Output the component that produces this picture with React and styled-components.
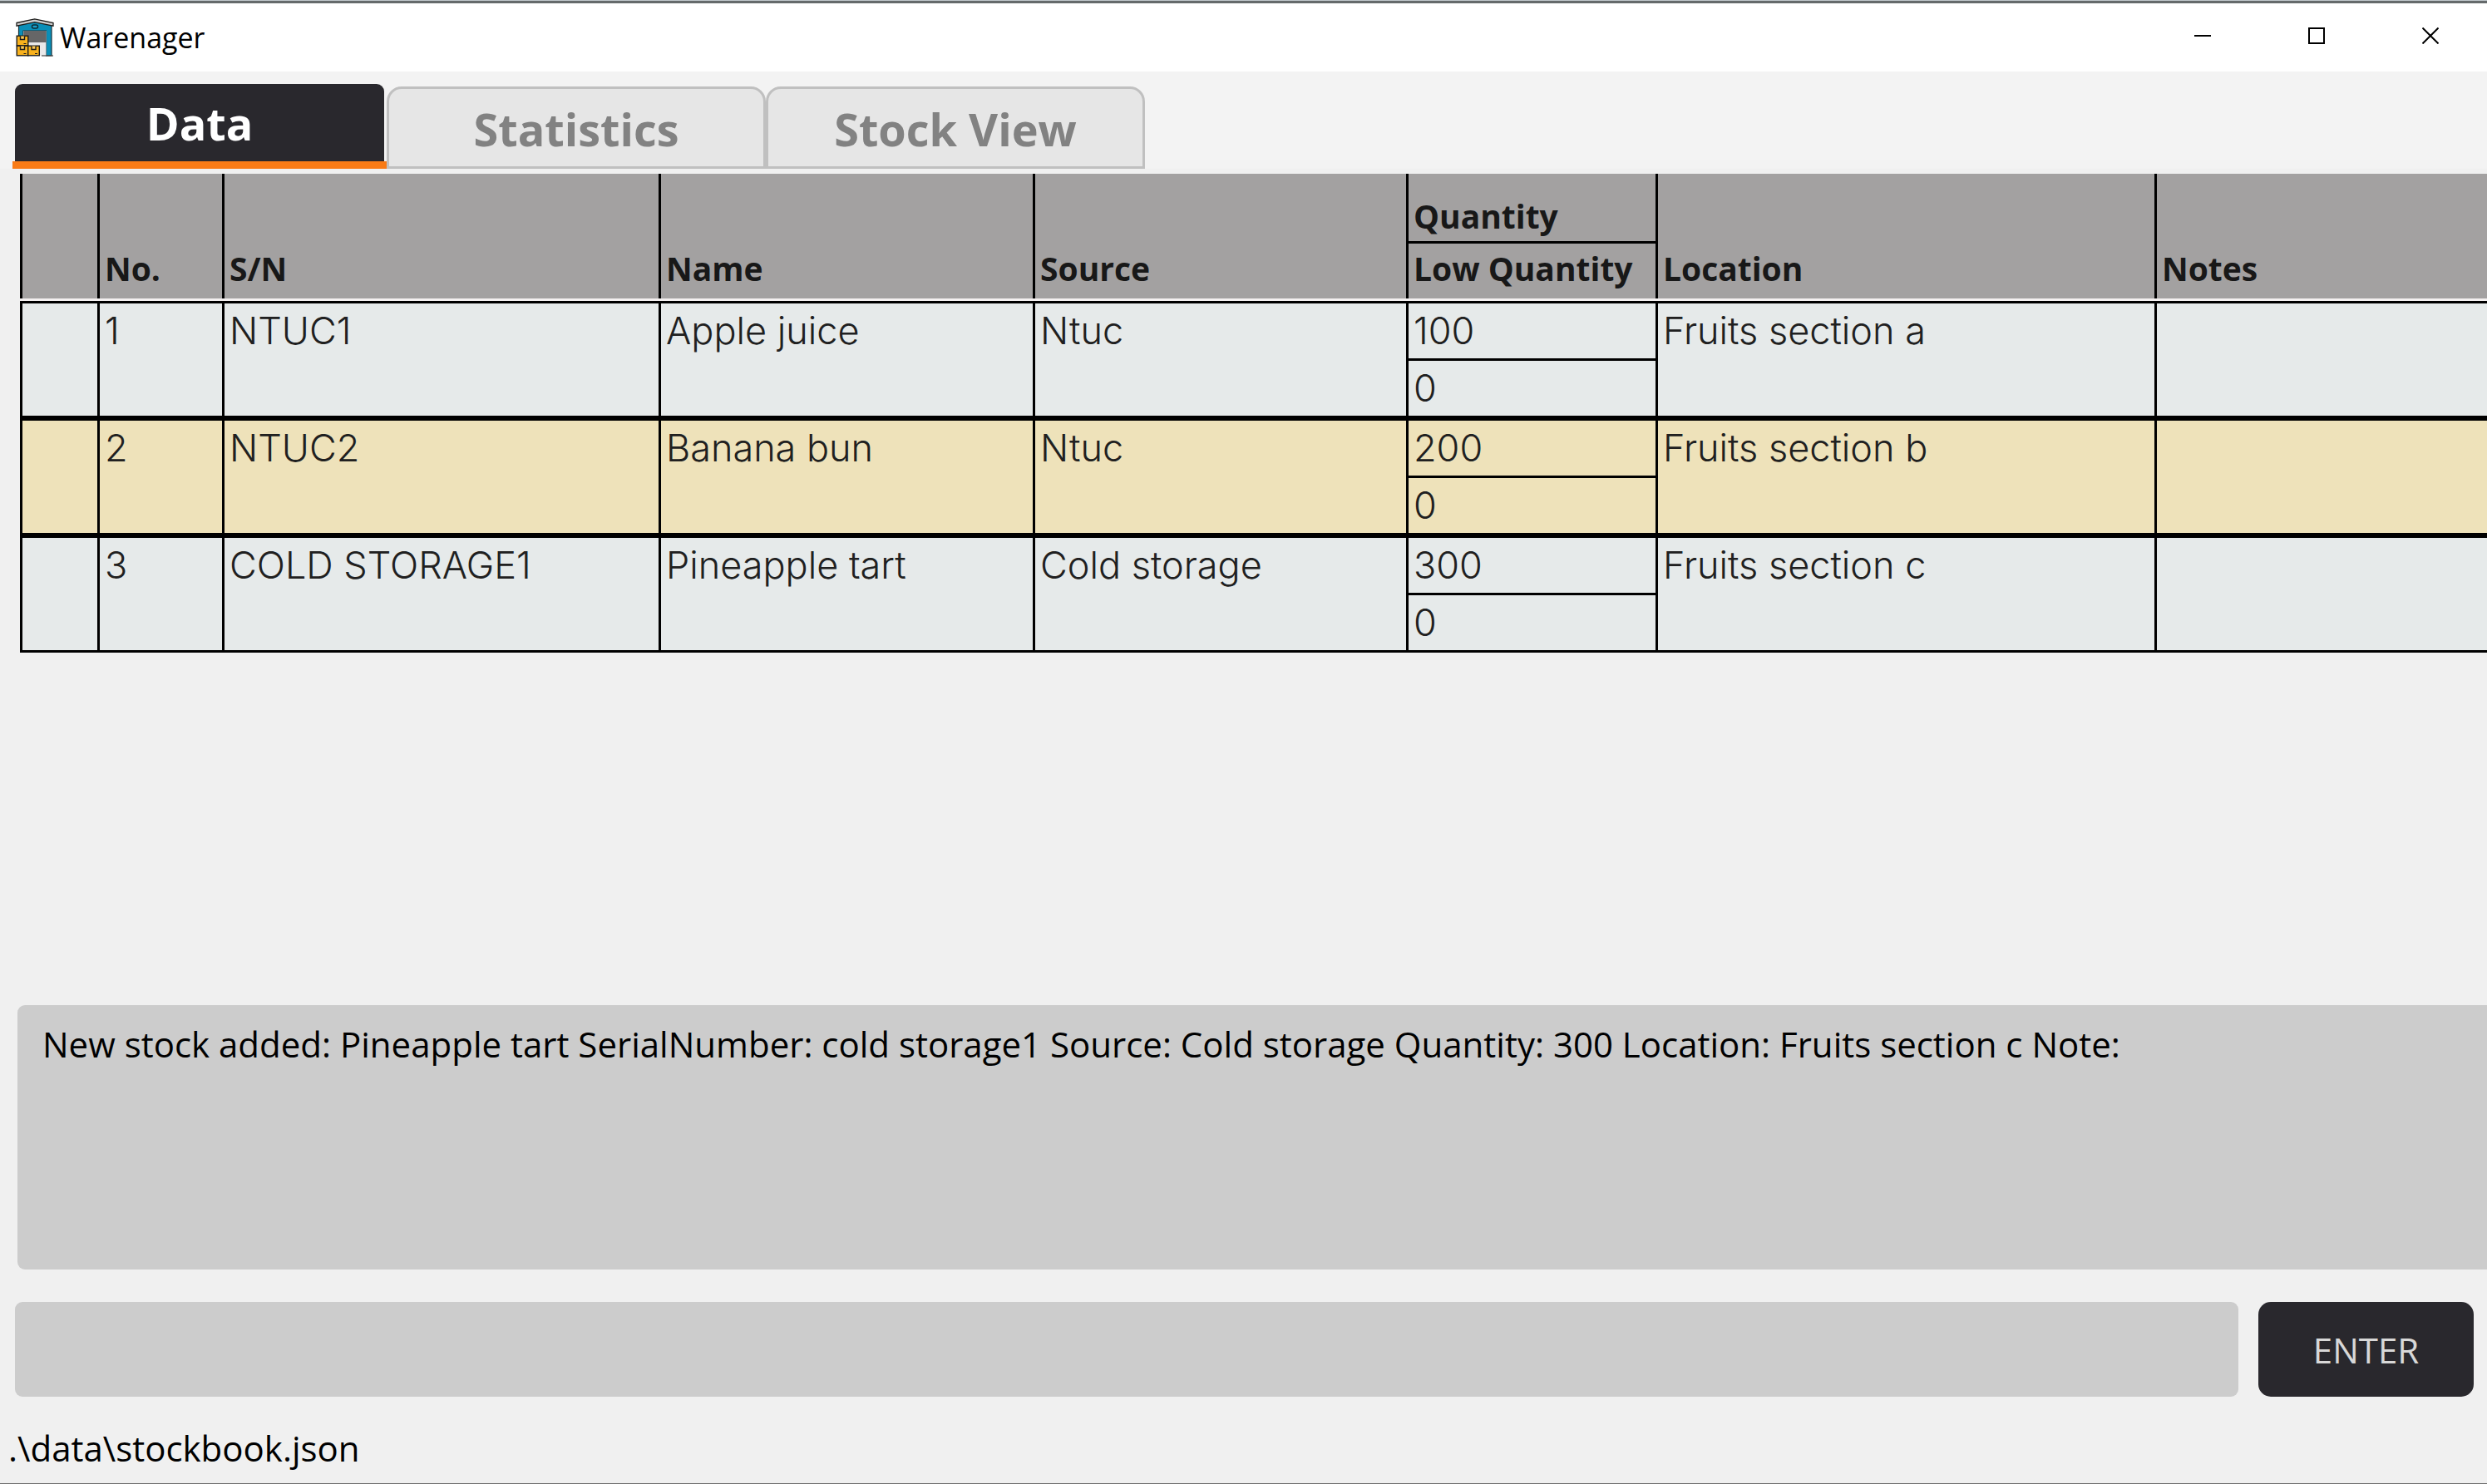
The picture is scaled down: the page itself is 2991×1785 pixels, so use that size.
import React, { useState } from "react";
import styled, { createGlobalStyle } from "styled-components";

const GlobalStyle = createGlobalStyle`
  *, *::before, *::after { box-sizing: border-box; }
  body { margin: 0; background: #f0f0f0; }
  button, input { font: inherit; margin: 0; border: 0; padding: 0; }
`;

const uiFont = `"Open Sans", "Noto Sans", sans-serif`;
const bodyFont = `"Inter", "Open Sans", sans-serif`;

const Window = styled.div`
  display: flex;
  flex-direction: column;
  min-height: 100vh;
  overflow: hidden;
  background: #f0f0f0;
  border-top: 1px solid #c0c8cc;
  border-bottom: 1px solid #6e6e6e;
  font-family: ${uiFont};
  color: #000;
`;

const TitleBar = styled.header`
  display: flex;
  align-items: center;
  gap: 7px;
  height: 85px;
  padding-left: 19px;
  background: #fff;
  border-top: 3px solid #656a6b;
`;

const Title = styled.h1`
  flex: 1;
  margin: 0;
  font-size: 34px;
  line-height: 48px;
  font-weight: 400;
`;

const Controls = styled.div`
  display: flex;
  align-self: flex-start;
`;

const ControlButton = styled.button`
  display: flex;
  align-items: center;
  justify-content: center;
  width: 137px;
  height: 78px;
  background: none;
`;

const TabStrip = styled.nav`
  display: flex;
  align-items: flex-end;
  height: 117px;
  padding-left: 15px;
  margin-bottom: 6px;
  background: #f3f3f3;
`;

const ActiveTab = styled.button`
  width: 450px;
  padding: 0 3px;
  background: none;
  border-bottom: 9px solid #f97b16;
`;

const ActiveLabel = styled.span`
  display: block;
  padding-top: 2px;
  border-radius: 9px 9px 0 0;
  background: #29282d;
  color: #fff;
  font-size: 54px;
  line-height: 91px;
  font-weight: 700;
`;

const Tab = styled.button`
  width: 456px;
  height: 99px;
  padding-top: 3px;
  border: 3px solid #c0c0c0;
  border-radius: 18px 18px 0 0;
  background: #e6e6e6;
  color: #828282;
  font-size: 54px;
  line-height: 84px;
  font-weight: 700;
`;

const TableArea = styled.main`
  flex: 1;
  padding-left: 24px;
`;

const StockTable = styled.table`
  width: 100%;
  table-layout: fixed;
  border-collapse: separate;
  border-spacing: 0;
`;

const Col = styled.col`
  width: ${(p) => (p.$width ? `${p.$width}px` : "auto")};
`;

const HeadCell = styled.th`
  height: 150px;
  padding: ${(p) => (p.$split ? "0" : "0 6px 9px")};
  border-left: 3px solid #000;
  background: #a3a1a1;
  color: #181818;
  font-size: 39px;
  line-height: 54px;
  font-weight: 700;
  text-align: left;
  vertical-align: bottom;
`;

const HeadUpper = styled.div`
  padding: 0 6px 3px;
  border-bottom: 3px solid #000;
`;

const HeadLower = styled.div`
  padding: 3px 6px 9px;
`;

const GapCell = styled.td`
  height: 3px;
  padding: 0;
  background: #f4f0f0;
`;

const Row = styled.tr`
  background: ${(p) => (p.$alt ? "#eee2ba" : "#e6eaea")};
`;

const Cell = styled.td`
  height: 141px;
  padding: ${(p) => (p.$split ? "0" : "6px 6px 0")};
  border: solid #000;
  border-width: 3px 0 3px 3px;
  color: #202020;
  font-family: ${bodyFont};
  font-size: 45px;
  line-height: 54px;
  font-weight: 300;
  vertical-align: top;
  white-space: nowrap;
`;

const Amount = styled.div`
  padding: 6px;

  & + & { border-top: 3px solid #000; }
`;

const Result = styled.section`
  min-height: 318px;
  margin-left: 21px;
  padding: 18px 30px;
  border-radius: 9px 0 0 9px;
  background: #cccccc;
  font-size: 42px;
  line-height: 58px;
`;

const CommandBar = styled.form`
  display: flex;
  gap: 24px;
  padding: 39px 16px 0 18px;
`;

const CommandInput = styled.input`
  flex: 1;
  min-width: 0;
  height: 114px;
  padding: 0 30px;
  border-radius: 9px;
  background: #cccccc;
  font-size: 42px;
`;

const EnterButton = styled.button`
  width: 259px;
  height: 114px;
  border-radius: 15px;
  background: #29282d;
  color: #d8d8d8;
  font-size: 42px;
`;

const StatusBar = styled.footer`
  padding: 33px 10px 13px;
  font-size: 42px;
  line-height: 58px;
`;

const columns = [
  { label: "", width: 93 },
  { label: "No.", width: 150 },
  { label: "S/N", width: 525 },
  { label: "Name", width: 450 },
  { label: "Source", width: 449 },
  { label: "Quantity", lower: "Low Quantity", width: 300 },
  { label: "Location", width: 600 },
  { label: "Notes" },
];

const stocks = [
  { sn: "NTUC1", name: "Apple juice", source: "Ntuc", quantity: 100, low: 0, location: "Fruits section a" },
  { sn: "NTUC2", name: "Banana bun", source: "Ntuc", quantity: 200, low: 0, location: "Fruits section b" },
  { sn: "COLD STORAGE1", name: "Pineapple tart", source: "Cold storage", quantity: 300, low: 0, location: "Fruits section c" },
];

function Box({ x, y }) {
  return (
    <g transform={`translate(${x} ${y})`}>
      <rect x="0.7" y="0.7" width="13.6" height="11.6" fill="#f9b21d" stroke="#1d1d1b" strokeWidth="1.4" />
      <path d="M5 1v4h5V1" fill="#fbc95a" stroke="#1d1d1b" strokeWidth="1.4" />
      <path d="M9 10h3" stroke="#1d1d1b" strokeWidth="1" />
    </g>
  );
}

function WarehouseIcon() {
  return (
    <svg width="46" height="46" viewBox="0 0 46 46" aria-hidden="true">
      <path d="M3.5 8 22.7 3 43 8v37h-6.5V15H9v12H3.5z" fill="#0b8fb8" stroke="#17323c" strokeWidth="1.2" />
      <rect x="9.5" y="15" width="27" height="30" fill="#e9e9ea" />
      <rect x="9.5" y="15" width="27" height="14" fill="#666667" />
      <path d="M31 45h14" stroke="#444" strokeWidth="1.2" />
      <rect x="19.5" y="8" width="7" height="4" rx="2" fill="#1aa3cc" stroke="#102a33" strokeWidth="1.5" />
      <path d="M1 5.500 22.700 .8 45 5.500v3.700L22.700 4.600 1 9.200z" fill="#cfcfcf" stroke="#1d1d1b" strokeWidth="1.3" />
      <Box x={0.5} y={20.5} />
      <Box x={0.5} y={32.5} />
      <Box x={14} y={32.5} />
    </svg>
  );
}

function ControlIcon({ d }) {
  return (
    <svg width="20" height="20" viewBox="0 0 20 20" fill="none" stroke="#000" strokeWidth="2" aria-hidden="true">
      <path d={d} />
    </svg>
  );
}

export default function App() {
  const [command, setCommand] = useState("");

  return (
    <Window>
      <GlobalStyle />
      <TitleBar>
        <WarehouseIcon />
        <Title>Warenager</Title>
        <Controls>
          <ControlButton type="button" aria-label="Minimize">
            <ControlIcon d="M0 10h20" />
          </ControlButton>
          <ControlButton type="button" aria-label="Maximize">
            <ControlIcon d="M1 1h18v18H1z" />
          </ControlButton>
          <ControlButton type="button" aria-label="Close">
            <ControlIcon d="M.5 .5l19 19M19.5 .5l-19 19" />
          </ControlButton>
        </Controls>
      </TitleBar>

      <TabStrip>
        <ActiveTab type="button" aria-current="page">
          <ActiveLabel>Data</ActiveLabel>
        </ActiveTab>
        <Tab type="button">Statistics</Tab>
        <Tab type="button">Stock View</Tab>
      </TabStrip>

      <TableArea>
        <StockTable>
          <colgroup>
            {columns.map((c, i) => (
              <Col key={i} $width={c.width} />
            ))}
          </colgroup>
          <thead>
            <tr>
              {columns.map((c, i) => (
                <HeadCell key={i} scope="col" $split={Boolean(c.lower)}>
                  {c.lower ? (
                    <>
                      <HeadUpper>{c.label}</HeadUpper>
                      <HeadLower>{c.lower}</HeadLower>
                    </>
                  ) : (
                    c.label
                  )}
                </HeadCell>
              ))}
            </tr>
            <tr aria-hidden="true">
              <GapCell colSpan={columns.length} />
            </tr>
          </thead>
          <tbody>
            {stocks.map((s, i) => (
              <Row key={s.sn} $alt={i % 2 === 1}>
                <Cell />
                <Cell>{i + 1}</Cell>
                <Cell>{s.sn}</Cell>
                <Cell>{s.name}</Cell>
                <Cell>{s.source}</Cell>
                <Cell $split>
                  <Amount>{s.quantity}</Amount>
                  <Amount>{s.low}</Amount>
                </Cell>
                <Cell>{s.location}</Cell>
                <Cell />
              </Row>
            ))}
          </tbody>
        </StockTable>
      </TableArea>

      <Result aria-live="polite">
        New stock added: Pineapple tart SerialNumber: cold storage1 Source: Cold storage Quantity: 300 Location: Fruits
        section c Note:
      </Result>

      <CommandBar onSubmit={(e) => e.preventDefault()}>
        <CommandInput
          type="text"
          aria-label="Command"
          value={command}
          onChange={(e) => setCommand(e.target.value)}
        />
        <EnterButton type="submit">ENTER</EnterButton>
      </CommandBar>

      <StatusBar>.\data\stockbook.json</StatusBar>
    </Window>
  );
}
